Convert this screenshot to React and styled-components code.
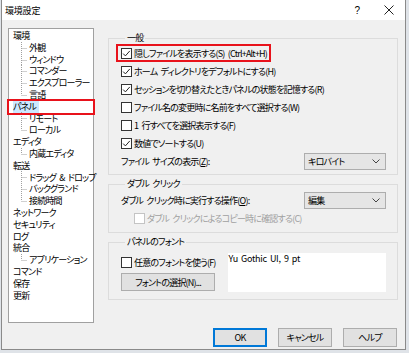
import styled, { createGlobalStyle } from 'styled-components';

const Global = createGlobalStyle`
  html, body {
    margin: 0;
    background: #dfe3e8;
  }
  body {
    font-family: "Noto Sans CJK JP", "Noto Sans", sans-serif;
    font-size: 9px;
    font-feature-settings: "palt" 1;
    letter-spacing: -0.8px;
    word-spacing: 2px;
    color: #000;
  }
`;

const Dialog = styled.div`
  width: 405px;
  height: 350px;
  margin-left: 1px;
  box-sizing: border-box;
  border: 1px solid #8a8a8a;
  border-top: none;
  background: #f0f0f0;
  display: flex;
  flex-direction: column;
`;

const TitleBar = styled.div`
  height: 20px;
  background: #fff;
  display: flex;
  align-items: center;
  padding-left: 3px;
`;

const Title = styled.span`
  flex: 1;
  font-size: 9px;
  letter-spacing: -0.2px;
`;

const CaptionButton = styled.div`
  width: ${(p) => p.$w}px;
  height: 20px;
  display: flex;
  align-items: center;
  justify-content: center;
  font-size: 10px;
  font-family: "Liberation Sans", sans-serif;
`;

const Body = styled.div`
  flex: 1;
  display: flex;
  flex-direction: column;
  padding: 8px 7px 3px 6px;
`;

const Main = styled.div`
  display: flex;
  gap: 14px;
`;

const Tree = styled.ul`
  list-style: none;
  margin: 0;
  padding: 1px 0 0;
  width: 86px;
  height: 295px;
  box-sizing: border-box;
  background: #fff;
  border: 1px solid #a0a0a0;
`;

const TreeRow = styled.div`
  height: 11.8px;
  line-height: 11.8px;
  display: flex;
  align-items: center;
  padding-left: ${(p) => (p.$child ? 7 : 4)}px;
  white-space: pre;
  outline: ${(p) => (p.$marked ? '2px solid #e8121b' : 'none')};
`;

const TreeLabel = styled.span`
  background: ${(p) => (p.$selected ? '#cce8ff' : 'transparent')};
  padding-right: ${(p) => (p.$selected ? 3 : 0)}px;
`;

const Column = styled.div`
  width: 290px;
  margin-top: 4px;
  display: flex;
  flex-direction: column;
  gap: 3px;
`;

const Group = styled.fieldset`
  margin: 0;
  padding: ${(p) => p.$pad};
  border: 1px solid #dcdcdc;
  min-width: 0;
`;

const Legend = styled.legend`
  font-size: 9px;
  line-height: 12px;
  padding: 0 2px;
  margin-left: 4px;
`;

const Row = styled.div`
  height: 18px;
  display: flex;
  align-items: center;
  justify-content: ${(p) => (p.$split ? 'space-between' : 'flex-start')};
  padding-left: ${(p) => p.$indent || 0}px;
  color: ${(p) => (p.$disabled ? '#a0a0a0' : '#000')};
  white-space: pre;
`;

const Marked = styled.div`
  display: inline-flex;
  align-items: center;
  height: 18px;
  margin-left: -5px;
  padding: 0 4px 0 5px;
  outline: 2px solid #e8121b;
  outline-offset: -2px;
  align-self: flex-start;
  white-space: pre;
`;

const Box = styled.span`
  width: 11px;
  height: 11px;
  box-sizing: border-box;
  border: 1px solid ${(p) => (p.$disabled ? '#c4c4c4' : '#333')};
  background: #fff;
  margin-right: 2px;
  display: inline-flex;
  align-items: center;
  justify-content: center;
  flex-shrink: 0;
`;

const Select = styled.div`
  width: 82px;
  height: 17px;
  box-sizing: border-box;
  background: #e5e5e5;
  border: 1px solid #adadad;
  display: flex;
  align-items: center;
  justify-content: space-between;
  padding: 0 5px 0 3px;
`;

const FontArea = styled.div`
  display: flex;
  gap: 12px;
`;

const FontLeft = styled.div`
  display: flex;
  flex-direction: column;
  gap: 2px;
`;

const Button = styled.button`
  width: ${(p) => p.$w}px;
  height: ${(p) => p.$h}px;
  box-sizing: border-box;
  background: #e1e1e1;
  border: 1px solid ${(p) => (p.$primary ? '#0078d7' : '#adadad')};
  box-shadow: ${(p) => (p.$primary ? 'inset 0 0 0 1px #0078d7' : 'none')};
  font: inherit;
  font-size: 9px;
  letter-spacing: -0.8px;
  padding: 0;
  color: #000;
`;

const Preview = styled.div`
  width: 158px;
  height: 39px;
  background: #fff;
  padding: 0 1px;
  box-sizing: border-box;
  line-height: 12px;
  font-size: 9px;
  letter-spacing: -0.3px;
  word-spacing: 1.5px;
  white-space: pre;
`;

const Footer = styled.div`
  margin-top: 5px;
  display: flex;
  justify-content: flex-end;
  gap: 11px;
  padding-right: 1px;
`;

function Check({ checked, disabled }) {
  return (
    <Box $disabled={disabled}>
      {checked && (
        <svg width="9" height="9" viewBox="0 0 9 9">
          <path d="M1.2 4.6 L3.4 6.9 L7.8 1.9" fill="none" stroke="#222" strokeWidth="1" />
        </svg>
      )}
    </Box>
  );
}

function Chevron() {
  return (
    <svg width="8" height="5" viewBox="0 0 8 5">
      <polyline points="0.5,0.5 4,4 7.5,0.5" fill="none" stroke="#444" strokeWidth="1" />
    </svg>
  );
}

function Branch({ last }) {
  return (
    <svg width="11" height="12" viewBox="0 0 11 12" style={{ flexShrink: 0, marginRight: 2 }}>
      <line x1="5.5" y1="0" x2="5.5" y2={last ? 6 : 12} stroke="#a0a0a0" strokeDasharray="1 1" />
      <line x1="5.5" y1="6.5" x2="11" y2="6.5" stroke="#a0a0a0" strokeDasharray="1 1" />
    </svg>
  );
}

const tree = [
  { label: '環境', children: ['外観', 'ウィンドウ', 'コマンダー', 'エクスプローラー', '言語'] },
  { label: 'パネル', selected: true, children: ['リモート', 'ローカル'] },
  { label: 'エディタ', children: ['内蔵エディタ'] },
  { label: '転送', children: ['ドラッグ & ドロップ', 'バックグランド', '接続時間'] },
  { label: 'ネットワーク' },
  { label: 'セキュリティ' },
  { label: 'ログ' },
  { label: '統合', children: ['アプリケーション'] },
  { label: 'コマンド' },
  { label: '保存' },
  { label: '更新' },
];

const options = [
  { label: 'ホーム ディレクトリをデフォルトにする(H)', checked: true },
  { label: 'セッションを切り替えたときパネルの状態を記憶する(R)', checked: true },
  { label: 'ファイル名の変更時に名前をすべて選択する(W)', checked: false },
  { label: '1 行すべてを選択表示する(F)', checked: false },
  { label: '数値でソートする(U)', checked: true },
];

export default function App() {
  return (
    <>
      <Global />
      <Dialog>
        <TitleBar>
          <Title>環境設定</Title>
          <CaptionButton $w={30}>?</CaptionButton>
          <CaptionButton $w={33}>
            <svg width="10" height="10" viewBox="0 0 10 10">
              <path d="M0.5 0.5 L9.5 9.5 M9.5 0.5 L0.5 9.5" stroke="#222" strokeWidth="1" />
            </svg>
          </CaptionButton>
        </TitleBar>
        <Body>
          <Main>
            <Tree>
              {tree.map((node) => (
                <li key={node.label}>
                  <TreeRow $marked={node.selected}>
                    <TreeLabel $selected={node.selected}>{node.label}</TreeLabel>
                  </TreeRow>
                  {(node.children || []).map((c, i, arr) => (
                    <TreeRow $child key={c}>
                      <Branch last={i === arr.length - 1} />
                      <TreeLabel>{c}</TreeLabel>
                    </TreeRow>
                  ))}
                </li>
              ))}
            </Tree>
            <Column>
              <Group $pad="0 11px 4px 12px">
                <Legend>一般</Legend>
                <Marked>
                  <Check checked />
                  <span>隠しファイルを表示する(S) (Ctrl+Alt+H)</span>
                </Marked>
                {options.map((o) => (
                  <Row key={o.label}>
                    <Check checked={o.checked} />
                    <span>{o.label}</span>
                  </Row>
                ))}
                <Row $split>
                  <span>
                    ファイル サイズの表示(<u>Z</u>):
                  </span>
                  <Select>
                    キロバイト
                    <Chevron />
                  </Select>
                </Row>
              </Group>
              <Group $pad="1px 11px 5px 12px">
                <Legend>ダブル クリック</Legend>
                <Row $split>
                  <span>
                    ダブル クリック時に実行する操作(<u>O</u>):
                  </span>
                  <Select>
                    編集
                    <Chevron />
                  </Select>
                </Row>
                <Row $indent={13} $disabled>
                  <Check disabled />
                  <span>ダブル クリックによるコピー時に確認する(C)</span>
                </Row>
              </Group>
              <Group $pad="5px 11px 7px 12px">
                <Legend>パネルのフォント</Legend>
                <FontArea>
                  <FontLeft>
                    <Row>
                      <Check />
                      <span>任意のフォントを使う(F)</span>
                    </Row>
                    <Button $w={94} $h={18}>フォントの選択(N)...</Button>
                  </FontLeft>
                  <Preview>Yu Gothic UI, 9 pt</Preview>
                </FontArea>
              </Group>
            </Column>
          </Main>
          <Footer>
            <Button $w={54} $h={19} $primary>OK</Button>
            <Button $w={54} $h={19}>キャンセル</Button>
            <Button $w={54} $h={19}>ヘルプ</Button>
          </Footer>
        </Body>
      </Dialog>
    </>
  );
}
